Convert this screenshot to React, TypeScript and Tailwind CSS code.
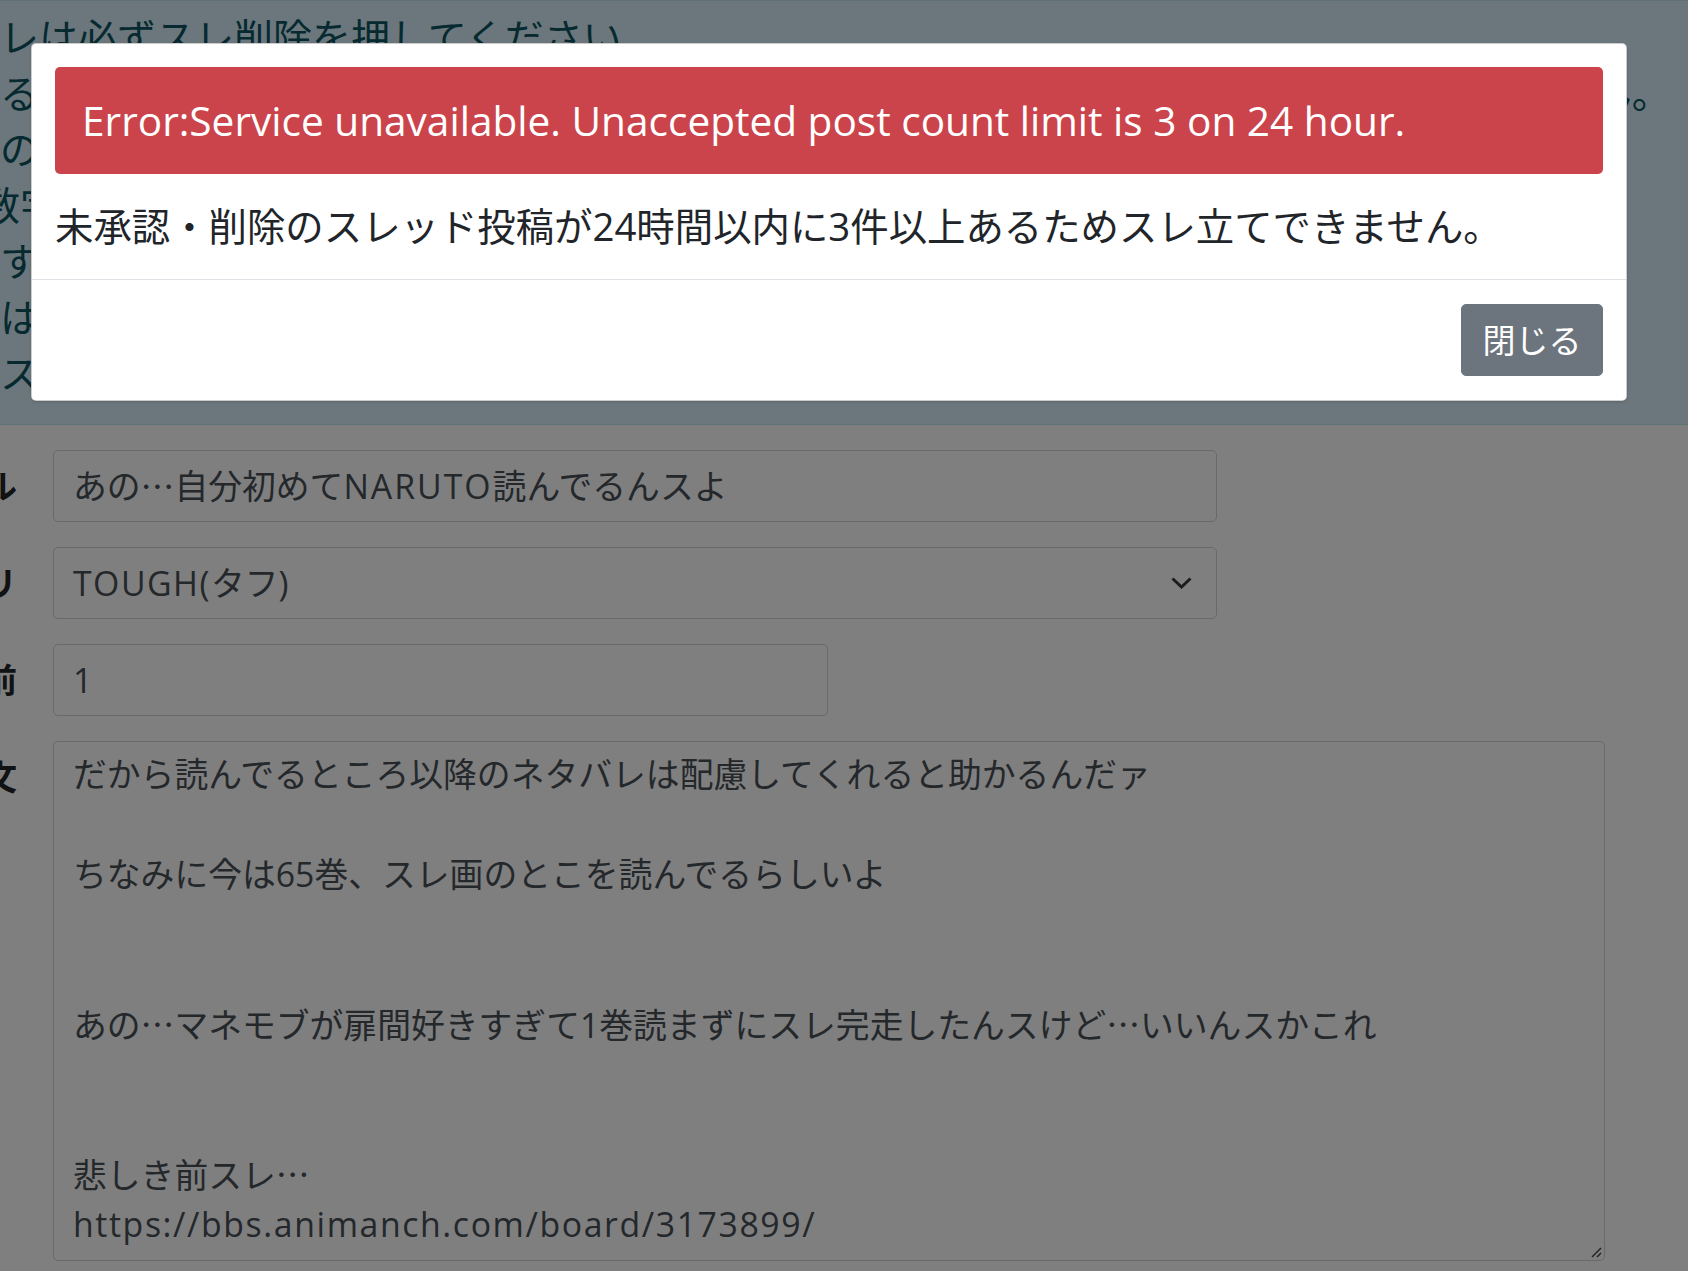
import { useState, type ReactNode } from 'react';

const infoLines = [
  { text: 'スレは必ずスレ削除を押してください。', cls: '' },
  { text: 'れる内容のスレッドは予告なく削除となる場合があります。ご了承ください。返信はできません。', cls: '' },
  { text: '下のルールを守ってご利用ください。', cls: '' },
  { text: '数字のみのタイトルや、意味のないスレ立ては禁止です。', cls: 'ml-[20px]' },
  { text: 'ですので同じ内容のスレを何度も立てないでください。', cls: '' },
  { text: 'ではなく、既存のスレッドをご利用ください。', cls: '' },
  { text: '　スレ画の無断転載にはご注意ください。', cls: '' },
];

const bodyLines = [
  'だから読んでるところ以降のネタバレは配慮してくれると助かるんだァ',
  '',
  'ちなみに今は65巻、スレ画のとこを読んでるらしいよ',
  '',
  '',
  'あの…マネモブが扉間好きすぎて1巻読まずにスレ完走したんスけど…いいんスかこれ',
  '',
  '',
  '悲しき前スレ…',
];

// "…" should use the Japanese centred dots, not the Latin baseline ellipsis
function jp(s: string): ReactNode[] {
  return s.split('…').flatMap((part, i) =>
    i === 0
      ? [part]
      : [
          <span key={i} className="font-['Noto_Sans_CJK_JP',sans-serif]">
            …
          </span>,
          part,
        ],
  );
}

function Label({ children }: { children: string }) {
  return (
    <div className="w-[150px] shrink-0 -ml-[133px] text-right font-bold text-[#212529] leading-[50px] pt-[11px]">
      {children}
    </div>
  );
}

export default function App() {
  const [open] = useState(true);

  return (
    <div className="relative w-[1688px] h-[1271px] overflow-hidden bg-white font-['Open_Sans','Noto_Sans_CJK_JP',sans-serif]">
      {/* Notice */}
      <div className="bg-[#d6eef8] border-y border-[#bee5eb] text-[#0c5460] text-[39px] leading-[56px] pt-[6px] pb-[25px] font-['Noto_Sans_CJK_JP',sans-serif]">
        <div className="-ml-[39px] whitespace-nowrap">
          {infoLines.map((l, i) => (
            <div key={i} className={l.cls}>
              {l.text}
            </div>
          ))}
        </div>
      </div>

      {/* Form */}
      <div className="mt-[25px] flex flex-col gap-[25px] text-[33.8px] text-[#495057]">
        <div className="flex">
          <Label>タイトル</Label>
          <div className="ml-[36px] w-[1164px] h-[72px] px-[19px] border border-[#ced4da] rounded-[5px] bg-white flex items-center leading-[50px] whitespace-nowrap">
            {jp('あの…自分初めて')}
            <span className="tracking-[2px]">NARUTO</span>
            読んでるんスよ
          </div>
        </div>
        <div className="flex">
          <Label>カテゴリ</Label>
          <div className="ml-[36px] w-[1164px] h-[72px] pl-[19px] pr-[24px] border border-[#ced4da] rounded-[5px] bg-white flex items-center justify-between">
            <span>
              <span className="tracking-[1.5px]">TOUGH(</span>タフ)
            </span>
            <svg width="21" height="12" viewBox="0 0 21 12" fill="none">
              <polyline points="1.5,1.5 10.5,10 19.5,1.5" stroke="#343a40" strokeWidth="3" />
            </svg>
          </div>
        </div>
        <div className="flex">
          <Label>名前</Label>
          <div className="ml-[36px] w-[775px] h-[72px] px-[19px] border border-[#ced4da] rounded-[5px] bg-white flex items-center">
            1
          </div>
        </div>
        <div className="flex">
          <Label>本文</Label>
          <div className="relative ml-[36px] w-[1552px] h-[520px] px-[19px] pt-[7px] border border-[#ced4da] rounded-[5px] bg-white leading-[50px] whitespace-pre overflow-hidden">
            {bodyLines.map((line, i) => (
              <div key={i} className="h-[50px]">
                {line ? jp(line) : '\u00a0'}
              </div>
            ))}
            <div className="h-[50px] tracking-[1.6px]">https://bbs.animanch.com/board/3173899/</div>
            {/* resize grip */}
            <svg className="absolute right-[2px] bottom-[2px]" width="12" height="12" viewBox="0 0 12 12">
              <line x1="2" y1="11" x2="11" y2="2" stroke="#444" strokeWidth="1.5" />
              <line x1="7" y1="11" x2="11" y2="7" stroke="#444" strokeWidth="1.5" />
            </svg>
          </div>
        </div>
      </div>

      {/* Modal */}
      {open && (
        <div className="absolute inset-0 bg-black/50 pl-[31px] pt-[43px]">
          <div className="w-[1596px] bg-white border border-black/20 rounded-[5px] shadow-sm">
            <div className="p-[23px] pb-[24px]">
              <div className="bg-[#cb444b] text-white rounded-[5px] px-[27px] py-[25px] text-[40.6px] leading-[57px] whitespace-nowrap">
                Error:Service unavailable. Unaccepted post count limit is 3 on 24 hour.
              </div>
              <p className="mt-[24px] text-[#212529] text-[38.4px] leading-[57px] whitespace-nowrap">
                未承認・削除のスレッド投稿が24時間以内に3件以上あるためスレ立てできません。
              </p>
            </div>
            <div className="border-t border-[#dee2e6] flex justify-end px-[23px] py-[24px]">
              <button className="w-[142px] h-[72px] bg-[#6c757d] text-white rounded-[5px] text-[33px] border border-[#6c757d] font-['Noto_Sans_CJK_JP',sans-serif]">
                閉じる
              </button>
            </div>
          </div>
        </div>
      )}
    </div>
  );
}
